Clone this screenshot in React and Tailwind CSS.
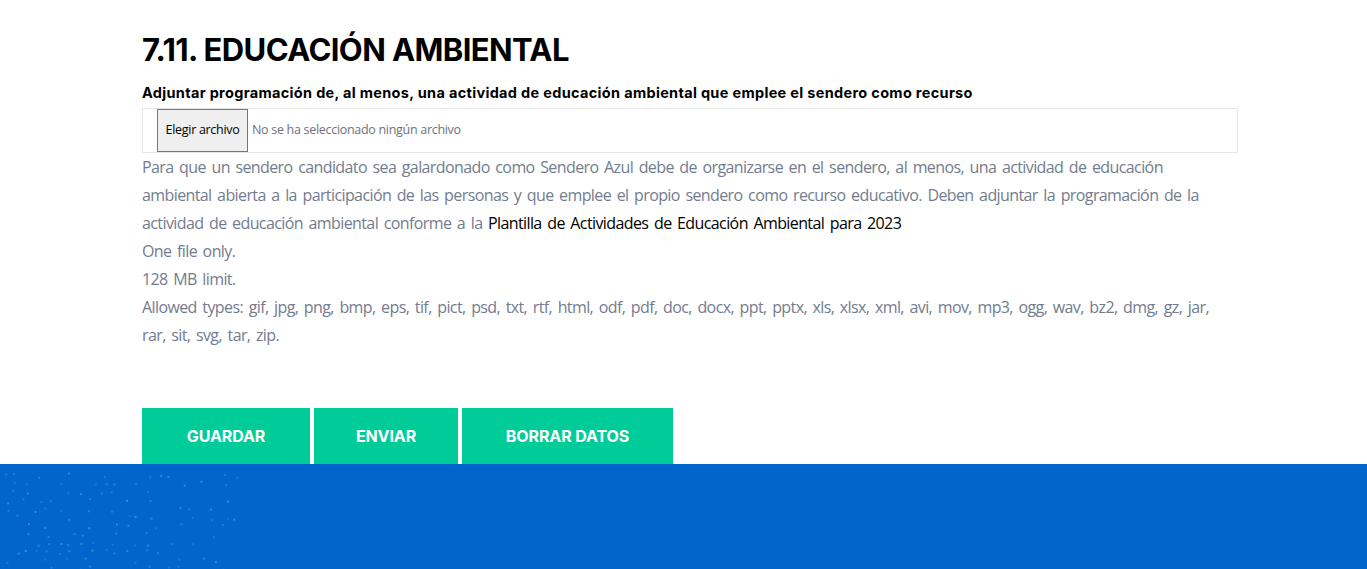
import React from "react";

const dots = (() => {
  const arr = [];
  let seed = 11;
  const rnd = () => {
    seed = (seed * 9301 + 49297) % 233280;
    return seed / 233280;
  };
  for (let r = 0; r < 12; r++) {
    const y = 8 + r * 8.5;
    for (let c = 0; c < 22; c++) {
      const x = c * 11 + rnd() * 8;
      if (x > 245 - r * 2) continue;
      if (rnd() < 0.6) continue;
      arr.push({ x, y: y + rnd() * 5, o: 0.1 + rnd() * 0.16 });
    }
  }
  return arr;
})();

export default function App() {
  const body = "font-['Open_Sans','Liberation_Sans',sans-serif]";
  return (
    <div className="w-[1367px] h-[569px] overflow-hidden bg-white flex flex-col">
      <div className="flex-1 pl-[142px] pr-[129px] pt-[31px]">
        <h1 className="font-['Inter','Lato',sans-serif] text-[31px] leading-[38px] font-bold tracking-[-0.6px] text-black">
          7.11. EDUCACIÓN AMBIENTAL
        </h1>
        <div className="mt-[15px] font-['Inter','Lato',sans-serif] font-bold text-[14.5px] leading-[18px] tracking-[0.32px] text-black">
          Adjuntar programación de, al menos, una actividad de educación ambiental que emplee el sendero como recurso
        </div>
        <div className="mt-[6px] h-[45px] w-[1096px] border border-[#e6e6e6] flex items-center pl-[14px]">
          <div className="h-[43px] w-[91px] border border-[#767676] bg-[#efefef] flex items-center justify-center text-[12.5px] text-black font-['Open_Sans',sans-serif] tracking-[-0.3px]">
            Elegir archivo
          </div>
          <span className="ml-[4px] text-[12.5px] text-[#6b7280] font-['Open_Sans',sans-serif] tracking-[-0.3px]">
            No se ha seleccionado ningún archivo
          </span>
        </div>
        <div className={`${body} text-[16px] leading-[28px] text-[#737c8e] tracking-[-0.6px] [word-spacing:2px] w-[1090px]`}>
          <p>
            Para que un sendero candidato sea galardonado como Sendero Azul debe de organizarse en el sendero, al menos, una actividad de educación ambiental abierta a la participación de las personas y que emplee el propio sendero como recurso educativo. Deben adjuntar la programación de la actividad de educación ambiental conforme a la{" "}
            <span className="text-black">Plantilla de Actividades de Educación Ambiental para 2023</span>
          </p>
          <p>One file only.</p>
          <p>128 MB limit.</p>
          <p>
            Allowed types: gif, jpg, png, bmp, eps, tif, pict, psd, txt, rtf, html, odf, pdf, doc, docx, ppt, pptx, xls, xlsx, xml, avi, mov, mp3, ogg, wav, bz2, dmg, gz, jar, rar, sit, svg, tar, zip.
          </p>
        </div>
        <div className="mt-[59px] flex gap-[4px] font-['Inter','Liberation_Sans',sans-serif] font-bold text-[16px] text-white tracking-[-0.1px]">
          <div className="w-[168px] h-[56px] bg-[#00cc99] flex items-center justify-center">GUARDAR</div>
          <div className="w-[144px] h-[56px] bg-[#00cc99] flex items-center justify-center">ENVIAR</div>
          <div className="w-[211px] h-[56px] bg-[#00cc99] flex items-center justify-center">BORRAR DATOS</div>
        </div>
      </div>
      <div className="relative h-[105px] bg-[#0066cc] shrink-0">
        <svg className="absolute left-0 top-0" width="260" height="105">
          {dots.map((d, i) => (
            <rect key={i} x={d.x} y={d.y} width="2" height="2" fill="#ffffff" opacity={d.o} />
          ))}
        </svg>
      </div>
    </div>
  );
}
